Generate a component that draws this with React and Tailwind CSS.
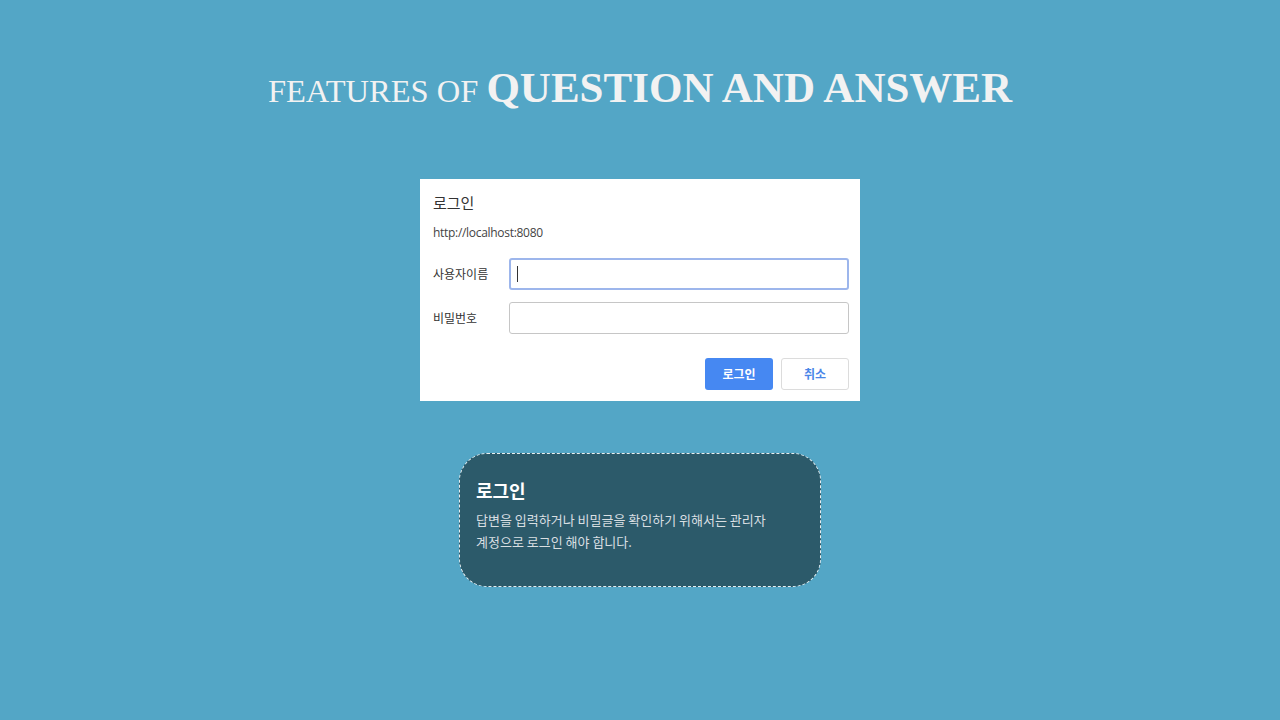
import React from 'react';

const App = () => {
  return (
    <div className="min-h-[720px] w-full bg-[#53a6c6] flex flex-col items-center pt-[66px]">
      {/* Title */}
      <h1 className="text-[#f2f2f2] font-['Liberation_Serif',serif] leading-none whitespace-nowrap">
        <span className="text-[32.5px]">FEATURES OF </span>
        <span className="text-[43px] font-bold">QUESTION AND ANSWER</span>
      </h1>

      {/* Login dialog */}
      <div className="mt-[70px] w-[440px] h-[222px] bg-white pl-[13px] pr-[11px] pt-[14px] font-['Noto_Sans_CJK_KR','Noto_Sans',sans-serif] text-[#333]">
        <div className="text-[15px] leading-5">로그인</div>
        <div className="mt-[12px] text-[12px] leading-4 text-[#444] font-['Open_Sans','Noto_Sans_CJK_KR',sans-serif] tracking-[-0.3px]">http://localhost:8080</div>

        <div className="mt-[17px] flex items-center">
          <span className="w-[76px] text-[12px] text-[#333]">사용자이름</span>
          <div className="flex-1 h-[32px] rounded-[3px] border-2 border-[#9db6ec] flex items-center pl-[6px]">
            <span className="w-px h-[16px] bg-[#333]" />
          </div>
        </div>
        <div className="mt-[12px] flex items-center">
          <span className="w-[76px] text-[12px] text-[#333]">비밀번호</span>
          <div className="flex-1 h-[32px] rounded-[3px] border border-[#c6c6c6]" />
        </div>

        <div className="mt-[24px] flex justify-end gap-[8px]">
          <button className="w-[68px] h-[32px] rounded-[3px] bg-[#4688f2] text-white text-[12px] font-bold">로그인</button>
          <button className="w-[68px] h-[32px] rounded-[3px] border border-[#dcdcdc] bg-white text-[#4a86e8] text-[12px] font-bold">취소</button>
        </div>
      </div>

      {/* Info card */}
      <div className="mt-[52px] w-[362px] h-[134px] rounded-[28px] border-[1.5px] border-dashed border-[#e8eef0] bg-[#2c5a6a] px-[16px] pt-[24px] font-['Noto_Sans_CJK_KR',serif]">
        <div className="text-[18px] font-bold text-white leading-6">로그인</div>
        <p className="mt-[7px] text-[13px] leading-[22px] text-[#d9dfe2] w-[310px] break-keep">
          답변을 입력하거나 비밀글을 확인하기 위해서는 관리자 계정으로 로그인 해야 합니다.
        </p>
      </div>
    </div>
  );
};

export default App;
